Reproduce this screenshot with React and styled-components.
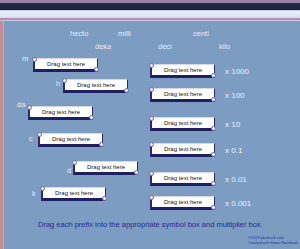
import React from "react";
import styled, { createGlobalStyle } from "styled-components";

const GlobalStyle = createGlobalStyle`
  html, body {
    margin: 0;
    padding: 0;
    background: #7c9cc2;
  }
  body {
    width: 300px;
    height: 249px;
    overflow: hidden;
    font-family: "Liberation Sans", Arial, sans-serif;
  }
`;

const Window = styled.div`
  width: 300px;
  height: 249px;
  display: flex;
  flex-direction: column;
  overflow: hidden;
`;

const Band = styled.div`
  height: ${(p) => p.$h}px;
  background: ${(p) => p.$bg};
  flex-shrink: 0;
`;

const Page = styled.div`
  flex: 1;
  background: #7c9cc2;
  border-left: 3px solid #c48c94;
  box-shadow: inset 1px 0 0 #a8b8d4;
  display: flex;
  flex-direction: column;
  padding-top: 9px;
`;

const WordRow = styled.div`
  display: flex;
  height: 8px;
  padding-left: ${(p) => p.$x}px;
  margin-bottom: ${(p) => p.$mb || 0}px;
`;

const Word = styled.span`
  width: ${(p) => (p.$w ? `${p.$w}px` : "auto")};
  flex-shrink: 0;
  font-size: 7.5px;
  line-height: 8px;
  color: #e4ecf6;
  white-space: nowrap;
`;

const Columns = styled.div`
  display: flex;
  margin-top: 7px;
`;

const LeftCol = styled.div`
  width: 147px;
  display: flex;
  flex-direction: column;
`;

const RightCol = styled.div`
  display: flex;
  flex-direction: column;
`;

const LeftRow = styled.div`
  display: flex;
  align-items: flex-start;
  padding-left: ${(p) => p.$x}px;
  margin-top: ${(p) => p.$mt}px;
`;

const Label = styled.span`
  width: ${(p) => p.$w}px;
  flex-shrink: 0;
  margin-top: ${(p) => p.$dy}px;
  font-size: 7.5px;
  line-height: 8px;
  color: #e4ecf6;
`;

const RightRow = styled.div`
  display: flex;
  align-items: center;
  margin-top: ${(p) => p.$mt}px;
`;

const Multiplier = styled.span`
  margin-left: 10px;
  font-size: 8px;
  line-height: 9px;
  color: #eef3fa;
  white-space: nowrap;
`;

const DropBox = styled.div`
  position: relative;
  box-sizing: border-box;
  width: 65px;
  height: 14px;
  flex-shrink: 0;
  background: #ffffff;
  border: 1px solid #2a2a74;
  border-top-color: #d6d6ee;
  border-left-width: 2px;
  border-bottom: 3px solid #1e1e62;
  display: flex;
  align-items: center;
  justify-content: center;
  font-size: 6px;
  color: #111;
  white-space: nowrap;

  &::before,
  &::after {
    content: "";
    position: absolute;
    width: 3px;
    height: 3px;
    border-radius: 50%;
    background: #eef0fa;
    border: 0.5px solid #6a6aa8;
  }
  &::before {
    left: -3px;
    top: -2px;
  }
  &::after {
    right: -2px;
    bottom: -3px;
  }
`;

const Instruction = styled.div`
  margin-top: 10px;
  padding-left: 35px;
  font-size: 7.5px;
  line-height: 9px;
  color: #1f2c94;
  white-space: nowrap;
`;

const Credit = styled.div`
  margin-top: 7px;
  padding-left: 245px;
  font-size: 3.8px;
  line-height: 4.5px;
  color: #25359a;
  white-space: nowrap;
`;

const leftRows = [
  { sym: "m", x: 19, w: 11, dy: -3.5, mt: 0 },
  { sym: "h", x: 53, w: 7, dy: 1, mt: 7 },
  { sym: "da", x: 14, w: 11, dy: -5, mt: 13 },
  { sym: "c", x: 26, w: 9, dy: 2, mt: 13 },
  { sym: "d", x: 64, w: 6, dy: 6, mt: 14 },
  { sym: "k", x: 29, w: 9, dy: 3, mt: 12 },
];

const rightRows = [
  { mult: "x 1000", mt: 6 },
  { mult: "x 100", mt: 10 },
  { mult: "x 10", mt: 15 },
  { mult: "x 0.1", mt: 12 },
  { mult: "x 0.01", mt: 15 },
  { mult: "x 0.001", mt: 10 },
];

export default function App() {
  return (
    <Window>
      <GlobalStyle />
      <Band $h={3} $bg="#9c80a8" />
      <Band $h={7} $bg="linear-gradient(#1e3046, #14233a)" />
      <Band $h={1} $bg="#c8cce4" />
      <Band $h={7} $bg="linear-gradient(#eceefa, #dcdcf0)" />
      <Band $h={2} $bg="#b48cb4" />
      <Band $h={1} $bg="#c6cde2" />
      <Page>
        <WordRow $x={67} $mb={5}>
          <Word $w={48}>hecto</Word>
          <Word $w={75}>milli</Word>
          <Word>centi</Word>
        </WordRow>
        <WordRow $x={92}>
          <Word $w={63}>deka</Word>
          <Word $w={61}>deci</Word>
          <Word>kilo</Word>
        </WordRow>
        <Columns>
          <LeftCol>
            {leftRows.map((r) => (
              <LeftRow key={r.sym} $x={r.x} $mt={r.mt}>
                <Label $w={r.w} $dy={r.dy}>{r.sym}</Label>
                <DropBox>Drag text here</DropBox>
              </LeftRow>
            ))}
          </LeftCol>
          <RightCol>
            {rightRows.map((r) => (
              <RightRow key={r.mult} $mt={r.mt}>
                <DropBox>Drag text here</DropBox>
                <Multiplier>{r.mult}</Multiplier>
              </RightRow>
            ))}
          </RightCol>
        </Columns>
        <Instruction>
          Drag each prefix into the appropriate symbol box and multiplier box.
        </Instruction>
        <Credit>
          ©2013 abcteach.com
          <br />
          Created with Smart Notebook
        </Credit>
      </Page>
    </Window>
  );
}
